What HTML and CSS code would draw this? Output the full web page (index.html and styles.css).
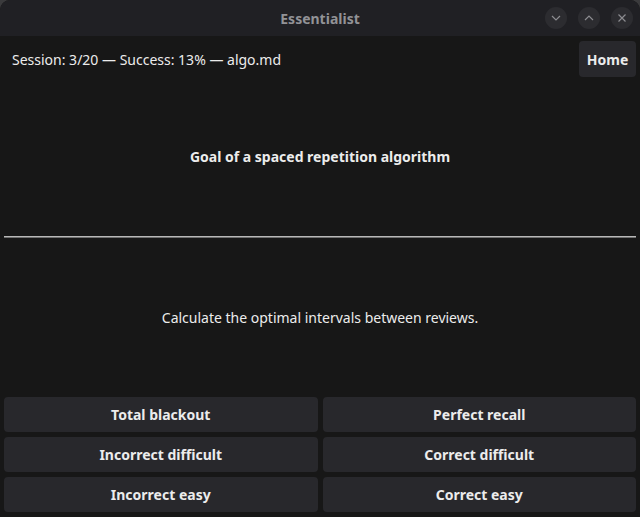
FILE: index.html
```html
<!DOCTYPE html>
<html lang="en">
<head>
<meta charset="utf-8">
<title>Essentialist</title>
<link rel="stylesheet" href="styles.css">
</head>
<body>
<div class="window">
	<div class="titlebar">
		<span class="title">Essentialist</span>
		<div class="controls">
			<span class="ctl"><svg width="12" height="12" viewBox="0 0 12 12"><path d="M2 4l4 4 4-4" fill="none" stroke="#8c8c90" stroke-width="1.2"/></svg></span>
			<span class="ctl"><svg width="12" height="12" viewBox="0 0 12 12"><path d="M2 8l4-4 4 4" fill="none" stroke="#8c8c90" stroke-width="1.2"/></svg></span>
			<span class="ctl"><svg width="12" height="12" viewBox="0 0 12 12"><path d="M2.5 2.5l7 7M9.5 2.5l-7 7" fill="none" stroke="#8c8c90" stroke-width="1.2"/></svg></span>
		</div>
	</div>
	<div class="main">
		<div class="header">
			<span class="status">Session: 3/20 — Success: 13% — algo.md</span>
			<button class="btn home">Home</button>
		</div>
		<div class="card question">Goal of a spaced repetition algorithm</div>
		<div class="rule"></div>
		<div class="card answer">Calculate the optimal intervals between reviews.</div>
		<div class="grades">
			<button class="btn">Total blackout</button>
			<button class="btn">Perfect recall</button>
			<button class="btn">Incorrect difficult</button>
			<button class="btn">Correct difficult</button>
			<button class="btn">Incorrect easy</button>
			<button class="btn">Correct easy</button>
		</div>
	</div>
</div>
</body>
</html>
```

FILE: styles.css
```css
html {
    background: #3a3a3c;
}

body {
    margin: 0;
    font-family: "Noto Sans", "Open Sans", sans-serif;
    font-size: 14px;
    color: #ececec;
}

.window {
    height: 517px;
    display: flex;
    flex-direction: column;
    background: #171717;
    border-radius: 10px 10px 0 0;
    overflow: hidden;
}

.titlebar {
    position: relative;
    height: 36px;
    flex: none;
    display: flex;
    align-items: center;
    justify-content: center;
    background: #202024;
}

.title {
    font-weight: bold;
    color: #929296;
}

.controls {
    position: absolute;
    right: 7px;
    top: 7px;
    display: flex;
    gap: 11px;
}

.ctl {
    width: 22px;
    height: 22px;
    border-radius: 50%;
    background: #2c2c30;
    display: flex;
    align-items: center;
    justify-content: center;
}

.main {
    flex: 1;
    display: flex;
    flex-direction: column;
    padding: 5px 4px;
}

.header {
    height: 36px;
    display: flex;
    align-items: center;
    justify-content: space-between;
}

.status {
    padding-left: 8px;
}

.btn {
    font-family: inherit;
    font-size: 14px;
    font-weight: bold;
    color: #ececec;
    background: #28282c;
    border: none;
    border-radius: 4px;
    padding: 0;
    height: 35px;
}

.home {
    height: 36px;
    width: 57px;
}

.card {
    flex: 1;
    display: flex;
    align-items: center;
    justify-content: center;
}

.question {
    font-weight: bold;
}

.rule {
    height: 1px;
    border-top: 1px solid #b8b8b8;
    background: #707070;
}

.grades {
    display: grid;
    grid-template-columns: 1fr 1fr;
    gap: 5px;
}
```
